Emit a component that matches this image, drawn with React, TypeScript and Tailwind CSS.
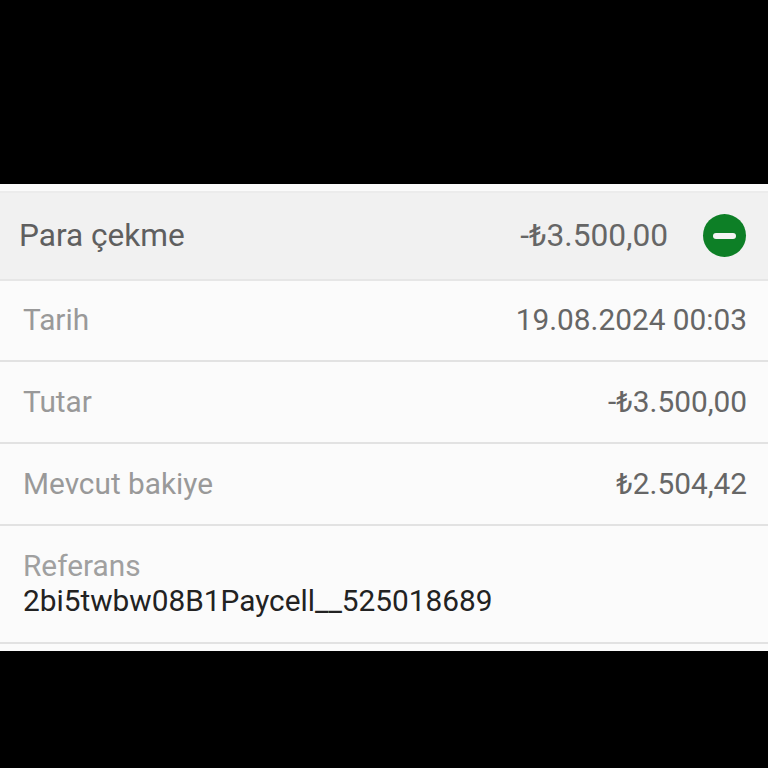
const rows = [
  { label: "Tarih", value: "19.08.2024 00:03", height: "h-[81px]" },
  { label: "Tutar", value: "-₺3.500,00", height: "h-[82px]" },
  { label: "Mevcut bakiye", value: "₺2.504,42", height: "h-[82px]" },
];

export default function App() {
  return (
    <div className="h-[768px] w-[768px] bg-black pt-[184px] font-['Roboto',sans-serif]">
      <div className="flex h-[467px] flex-col bg-[#fbfbfb]">
        <div className="mt-[7px] flex h-[90px] items-center justify-between border-y-2 border-t-[#ececec] border-b-[#e6e6e6] bg-[#f1f1f1] pl-[19px] pr-[22px]">
          <span className="text-[31.6px] text-[#5f5f5f]">Para çekme</span>
          <div className="flex items-center gap-[35px]">
            <span className="text-[31.7px] text-[#666666]">-₺3.500,00</span>
            <div className="flex h-[43px] w-[43px] items-center justify-center rounded-full bg-[#0d7f26]">
              <div className="h-[6px] w-[23px] rounded-sm bg-[#f4f4f4]" />
            </div>
          </div>
        </div>
        {rows.map((row) => (
          <div
            key={row.label}
            className={`flex ${row.height} items-center justify-between border-b-2 border-[#e2e2e2] pl-[23px] pr-[21px]`}
          >
            <span className="text-[29.8px] text-[#999999]">{row.label}</span>
            <span className="text-[29.8px] text-[#666666]">{row.value}</span>
          </div>
        ))}
        <div className="flex h-[118px] flex-col justify-center border-b-2 border-[#e2e2e2] pb-[3px] pl-[23px] leading-[35px]">
          <span className="text-[29.8px] text-[#a0a0a0]">Referans</span>
          <span className="text-[29.8px] text-[#222222]">2bi5twbw08B1Paycell__525018689</span>
        </div>
      </div>
    </div>
  );
}
